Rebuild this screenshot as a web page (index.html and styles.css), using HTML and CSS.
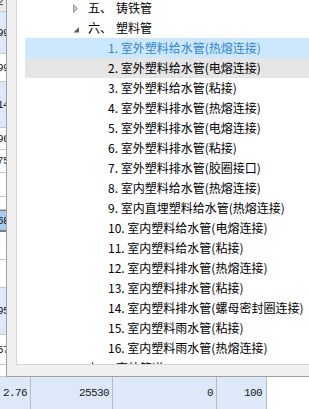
FILE: index.html
```html
<!DOCTYPE html>
<html lang="zh-CN">
<head>
    <meta charset="UTF-8">
    <title>选择定额章节</title>
    <link rel="stylesheet" href="styles.css">
</head>
<body>
    <!-- Tabla de fondo -->
    <div class="grid">
        <div class="strip">
            <div class="srow head h-12">2</div>
            <div class="srow blue h-42">99</div>
            <div class="srow h-28">99</div>
            <div class="srow blue h-46">14</div>
            <div class="srow h-22">96</div>
            <div class="srow h-23">75</div>
            <div class="srow h-24"></div>
            <div class="srow h-13"></div>
            <div class="srow sel h-22">68</div>
            <div class="srow h-28"></div>
            <div class="srow h-28"></div>
            <div class="srow blue h-47">95</div>
            <div class="srow h-30">57</div>
            <div class="srow h-12"></div>
        </div>
        <div class="foot">
            <div class="cell c1">2.76</div>
            <div class="cell c2">25530</div>
            <div class="cell c3">0</div>
            <div class="cell c4">100</div>
        </div>
    </div>

    <!-- Ventana emergente con el árbol -->
    <div class="popup">
        <div class="panel">
            <ul class="tree">
                <li class="node l0">
                    <span class="arrow">
                        <svg width="16" height="20" viewBox="0 0 16 20"><polygon points="1.5,6.5 1.5,14.5 5.5,10.5" fill="#c8c8c8" stroke="#9a9a9a"/></svg>
                    </span>
                    <span class="num">五、</span><span>铸铁管</span>
                </li>
                <li class="node l0">
                    <span class="arrow">
                        <svg width="16" height="20" viewBox="0 0 16 20"><polygon points="7,9 7,14.5 1.5,14.5" fill="#5e5e5e"/></svg>
                    </span>
                    <span class="num">六、</span><span>塑料管</span>
                </li>
                <li class="node l1 sel">1. 室外塑料给水管(热熔连接)</li>
                <li class="node l1 hover">2. 室外塑料给水管(电熔连接)</li>
                <li class="node l1">3. 室外塑料给水管(粘接)</li>
                <li class="node l1">4. 室外塑料排水管(热熔连接)</li>
                <li class="node l1">5. 室外塑料排水管(电熔连接)</li>
                <li class="node l1">6. 室外塑料排水管(粘接)</li>
                <li class="node l1">7. 室外塑料排水管(胶圈接口)</li>
                <li class="node l1">8. 室内塑料给水管(热熔连接)</li>
                <li class="node l1">9. 室内直埋塑料给水管(热熔连接)</li>
                <li class="node l1">10. 室内塑料给水管(电熔连接)</li>
                <li class="node l1">11. 室内塑料给水管(粘接)</li>
                <li class="node l1">12. 室内塑料排水管(热熔连接)</li>
                <li class="node l1">13. 室内塑料排水管(粘接)</li>
                <li class="node l1">14. 室内塑料排水管(螺母密封圈连接)</li>
                <li class="node l1">15. 室内塑料雨水管(粘接)</li>
                <li class="node l1">16. 室内塑料雨水管(热熔连接)</li>
                <li class="node l0">
                    <span class="arrow">
                        <svg width="16" height="20" viewBox="0 0 16 20"><polygon points="1.5,6.5 1.5,14.5 5.5,10.5" fill="#c8c8c8" stroke="#9a9a9a"/></svg>
                    </span>
                    <span class="num">七、</span><span>室外管道</span>
                </li>
            </ul>
        </div>
    </div>
</body>
</html>
```

FILE: styles.css
```css
* {
    box-sizing: border-box;
}

body {
    margin: 0;
    width: 309px;
    height: 409px;
    overflow: hidden;
    position: relative;
    background: #ffffff;
    font-family: "Liberation Mono", "DejaVu Sans Mono", monospace;
    font-size: 11px;
    letter-spacing: -0.6px;
    color: #1a1a1a;
}

/* Tabla de fondo */
.grid {
    display: flex;
    flex-direction: column;
    height: 100%;
}

.strip {
    display: flex;
    flex-direction: column;
    flex: 1;
}

.srow {
    display: flex;
    align-items: center;
    border-bottom: 1px solid #c9c9c9;
    text-indent: -3px;
    white-space: nowrap;
    overflow: hidden;
}

.srow.head {
    background: #ececec;
    line-height: 4px;
    align-items: flex-start;
}

.srow.blue {
    background: #dde8f8;
}

.srow.sel {
    background: #a9cbf2;
    border-top: 1px solid #7d7d7d;
    border-bottom: 2px solid #7d7d7d;
}

.h-12 { height: 12px; }
.h-13 { height: 13px; }
.h-22 { height: 22px; }
.h-23 { height: 23px; }
.h-24 { height: 24px; }
.h-28 { height: 28px; }
.h-30 { height: 30px; }
.h-42 { height: 42px; }
.h-46 { height: 46px; }
.h-47 { height: 47px; }

.foot {
    display: flex;
    height: 32px;
    flex-shrink: 0;
}

.cell {
    background: #dde8f8;
    border-right: 1px solid #bdbdbd;
    text-align: right;
    line-height: 32px;
    padding-right: 3px;
}

.c1 { width: 31px; }
.c2 { width: 82px; }
.c3 { width: 104px; }
.c4 { width: 50px; padding-right: 4px; }

/* Ventana emergente */
.popup {
    position: absolute;
    left: 6px;
    top: -20px;
    width: 330px;
    height: 397px;
    background: #f0f0f0;
    border-left: 1px solid #a0a0a0;
    border-bottom: 1px solid #a0a0a0;
    padding: 0 0 11px 9px;
    letter-spacing: normal;
}

.panel {
    height: 100%;
    background: #ffffff;
    border-left: 1px solid #d6d6d6;
    border-bottom: 1px solid #d6d6d6;
    padding: 18px 0 0 8px;
    overflow: hidden;
}

.tree {
    list-style: none;
    margin: 0;
    padding: 0;
    font-family: "Noto Sans CJK SC", "Noto Sans", sans-serif;
    font-size: 12px;
    color: #000000;
}

.node {
    display: flex;
    align-items: center;
    height: 20px;
    line-height: 20px;
    white-space: nowrap;
}

.node.l0 {
    padding-left: 47px;
}

.node.l1 {
    padding-left: 83px;
}

.node.sel {
    background: #cce8ff;
    color: #3385d6;
}

.node.hover {
    background: #e5e5e5;
}

.arrow {
    display: flex;
    width: 16px;
    height: 20px;
}

.num {
    margin-right: 4px;
}
```
